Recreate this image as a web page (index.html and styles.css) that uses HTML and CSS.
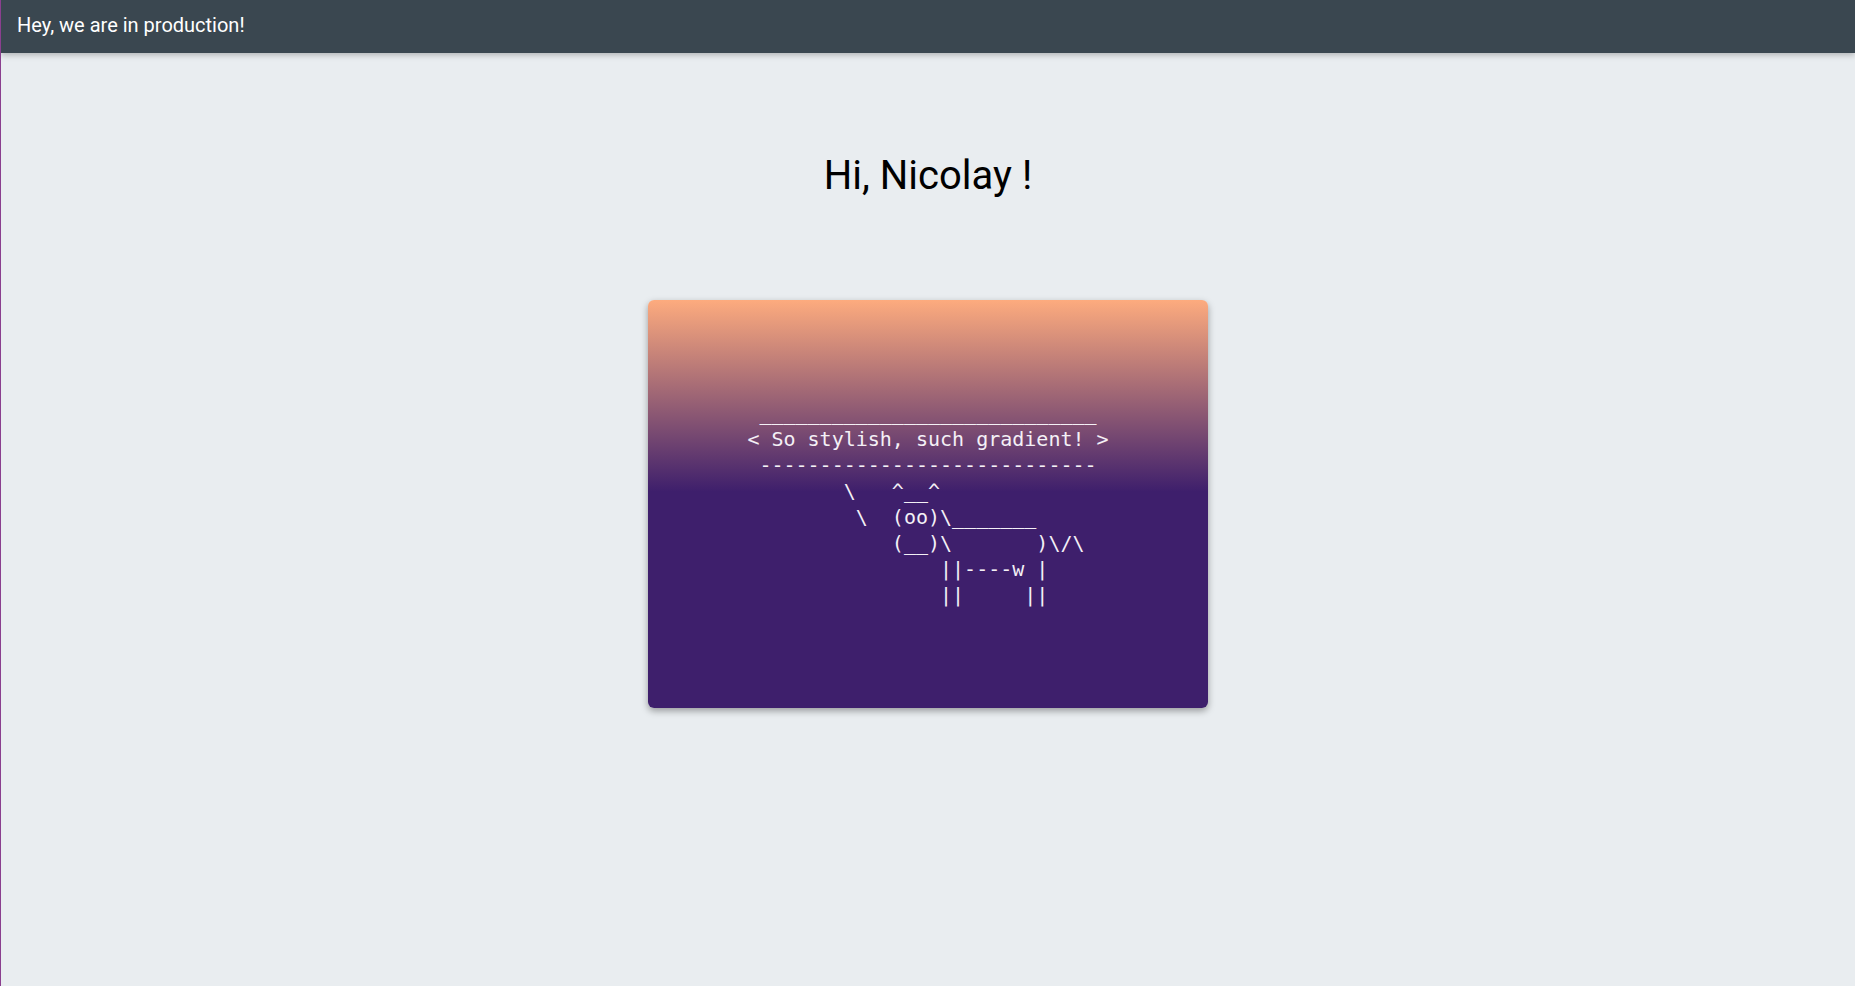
FILE: index.html
```html
<!DOCTYPE html>
<html lang="en">
<head>
<meta charset="utf-8">
<title>Hi</title>
<link rel="stylesheet" href="styles.css">
</head>
<body>
<header class="topbar">Hey, we are in production!</header>
<main class="content">
  <h1 class="greeting">Hi, Nicolay !</h1>
  <div class="card">
<pre class="cow"> ____________________________
&lt; So stylish, such gradient! &gt;
 ----------------------------
        \   ^__^
         \  (oo)\_______
            (__)\       )\/\
                ||----w |
                ||     ||</pre>
  </div>
</main>
</body>
</html>
```
FILE: styles.css
```css
html, body {
  margin: 0;
  padding: 0;
}
body {
  min-height: 986px;
  background: #e9edf0;
  border-left: 1px solid #8a3f8f;
  font-family: Roboto, "Noto Sans", sans-serif;
  box-sizing: border-box;
}
.topbar {
  height: 53px;
  box-sizing: border-box;
  background: #3a4750;
  color: #ffffff;
  font-size: 20px;
  line-height: 51px;
  padding-left: 16px;
  box-shadow: 0 2px 6px rgba(0, 0, 0, 0.25);
  position: relative;
}
.content {
  display: flex;
  flex-direction: column;
  align-items: center;
}
.greeting {
  margin: 99px 0 0;
  font-size: 40px;
  line-height: 48px;
  font-weight: 400;
  color: #000;
}
.card {
  margin-top: 100px;
  width: 560px;
  height: 408px;
  border-radius: 6px;
  background: linear-gradient(to bottom, #fdab7e 0%, #3e1f6c 47%, #3e1f6c 100%);
  box-shadow: 0 3px 7px rgba(0, 0, 0, 0.35);
  display: flex;
  align-items: center;
  justify-content: center;
}
.cow {
  margin: 0;
  font-family: "DejaVu Sans Mono", "Liberation Mono", monospace;
  font-size: 20px;
  line-height: 26px;
  color: #f4f0f6;
}
```
